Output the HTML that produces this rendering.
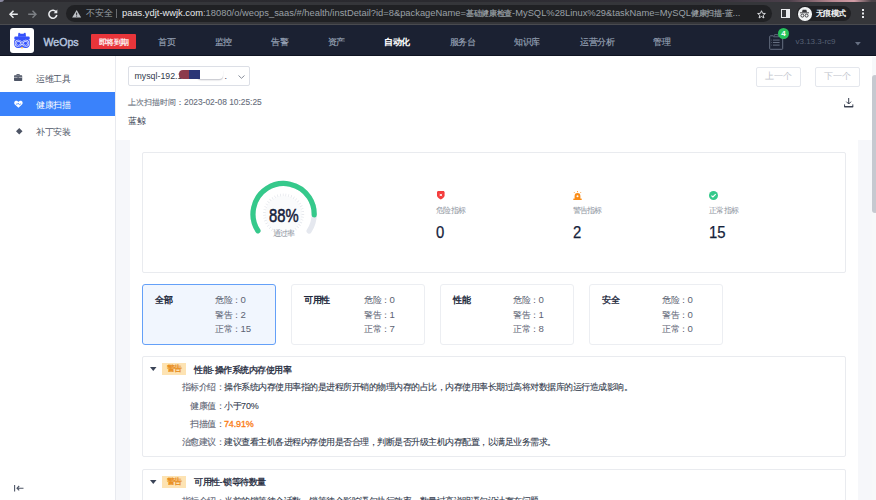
<!DOCTYPE html>
<html><head><meta charset="utf-8">
<style>
*{margin:0;padding:0;box-sizing:border-box}
html,body{width:876px;height:500px;overflow:hidden;background:#fff;font-family:"Liberation Sans",sans-serif;font-size:8.5px;color:#313a4c}
.a{position:absolute;white-space:nowrap;line-height:10px}
svg{position:absolute;overflow:visible}
/* browser chrome */
#tabs{position:absolute;left:0;top:0;width:876px;height:2.5px;background:linear-gradient(90deg,#2c2b30 0%,#2a2a2f 50%,#34313a 80%,#4a3f4a 90%,#b88790 95%,#d19ca5 97.5%,#4a4348 99.5%)}
#toolbar{position:absolute;left:0;top:2px;width:876px;height:22px;background:#35363a}
#tsep{position:absolute;left:0;top:24px;width:876px;height:1px;background:#4a4b4f}
#omni{position:absolute;left:66px;top:5px;width:706px;height:17px;border-radius:9px;background:#202124}
#url{position:absolute;left:122px;top:8px;font-size:9.35px;line-height:11px;width:628px;overflow:hidden;color:#9aa0a6;white-space:nowrap}
#url b{font-weight:normal;color:#e8eaed}
#url i{font-style:normal;font-size:8px;letter-spacing:-.3px;-webkit-text-stroke:.2px #9aa0a6}
#incog{position:absolute;left:797px;top:6px;width:54px;height:15px;border-radius:8px;background:#202124}
#nav{position:absolute;left:0;top:25px;width:876px;height:31px;background:#1b2132;border-bottom:1px solid #0f1422}
.nv{position:absolute;top:36.5px;color:#98a3b6;-webkit-text-stroke:.15px #98a3b6;font-size:9px;letter-spacing:-.5px;line-height:10px;white-space:nowrap}
/* sidebar */
#side{position:absolute;left:0;top:56px;width:116px;height:444px;background:#fff;border-right:1px solid #e8eaef}
.si{position:absolute;left:0;width:115px;height:24px}
.si span{position:absolute;left:36px;top:7.5px;font-size:9px;letter-spacing:-.5px;line-height:10px;color:#4e5566;white-space:nowrap}
/* content */
#gray{position:absolute;left:116px;top:140px;width:760px;height:360px;background:#f6f7fa}
#white{position:absolute;left:130px;top:140px;width:728px;height:360px;background:#fff}
#sbar{position:absolute;left:872px;top:57px;width:4px;height:443px;background:#f7f8fa}
#thumb{position:absolute;left:872px;top:75px;width:6px;height:138px;background:#c6c9d0;border-radius:3px}
.btn{position:absolute;top:67px;width:45.3px;height:19.5px;border:1px solid #e4e7ed;border-radius:2px;color:#c0c4cc;font-size:8.5px;line-height:17px;text-align:center}
.card{position:absolute;border:1px solid #e9ebef;border-radius:2px;background:#fff}
.cat{position:absolute;top:284px;width:134px;height:60.5px;border:1px solid #eceef2;border-radius:3px;background:#fff}
.cat.on{border-color:#64a0f8;background:#f1f6fe}
.cat u{text-decoration:none;font-size:9.6px;letter-spacing:0}
.cat b{position:absolute;left:12px;top:10px;font-size:9px;letter-spacing:-.5px;line-height:10px;color:#1f2a3d;font-weight:normal;-webkit-text-stroke:.4px #1f2a3d;white-space:nowrap}
.cat i{position:absolute;left:72px;font-style:normal;font-size:9px;letter-spacing:-.5px;line-height:10px;color:#5c6373;white-space:nowrap}
.stl{position:absolute;top:205.5px;font-size:8px;letter-spacing:-.7px;line-height:9px;color:#8d93a0;white-space:nowrap}
.stn{position:absolute;top:225px;font-size:16px;line-height:16px;color:#15223a;-webkit-text-stroke:.25px #15223a;transform:scaleX(.93);transform-origin:0 0}
.lab{position:absolute;width:44px;text-align:right;color:#5c6373;-webkit-text-stroke:.1px #5c6373;white-space:nowrap;font-size:9px;letter-spacing:-.5px;line-height:10px}
.val{position:absolute;left:224px;color:#313a4c;-webkit-text-stroke:.1px #313a4c;white-space:nowrap;font-size:9px;letter-spacing:-.5px;line-height:10px}
.tag{position:absolute;width:24px;height:12px;background:#fde3b3;color:#e98f22;-webkit-text-stroke:.3px #e98f22;font-size:8px;letter-spacing:-.5px;line-height:12px;text-align:center;padding-left:.5px}
</style></head><body>
<div id="tabs"></div>
<div id="toolbar"></div>
<div class="a" style="left:-2px;top:-3px;width:6px;height:5px;border-radius:50%;background:#8a89a0"></div>
<div id="tsep"></div>
<!-- back / fwd / reload -->
<svg style="left:8.9px;top:9.6px" width="9" height="8.4" viewBox="0 0 10 9.4"><path d="M9.8 4.7H1.4M5 .8L1.1 4.7 5 8.6" stroke="#e8eaed" stroke-width="1.7" fill="none"/></svg>
<svg style="left:28.2px;top:9.6px" width="9" height="8.4" viewBox="0 0 10 9.4"><path d="M.2 4.7H8.6M5 .8L8.9 4.7 5 8.6" stroke="#7d8085" stroke-width="1.6" fill="none"/></svg>
<svg style="left:48px;top:9px" width="10" height="10" viewBox="0 0 10 10"><path d="M8.3 3.2A4 4 0 1 0 8.8 6" stroke="#e8eaed" stroke-width="1.6" fill="none"/><path d="M9.3 0.6v3.6H5.7z" fill="#e8eaed"/></svg>
<div id="omni"></div>
<svg style="left:72px;top:9.6px" width="9.3" height="7.5" viewBox="0 0 9 7.5"><path d="M4.5 0L9 7.5H0z" fill="#bdc1c6"/><path d="M4.5 2.6v2.3M4.5 5.6v1" stroke="#202124" stroke-width="1"/></svg>
<div class="a" style="left:86px;top:8px;font-size:8.8px;line-height:11px;color:#9aa0a6">不安全</div>
<div class="a" style="left:116.3px;top:9px;width:.8px;height:9px;background:#6a6c70"></div>
<div id="url"><b>paas.ydjt-wwjk.com</b>:18080/o/weops_saas/#/health/instDetail?id=8&amp;packageName=<i>基础健康检查</i>-MySQL%28Linux%29&amp;taskName=MySQL<i>健康扫描</i>-<i>蓝</i>...</div>
<svg style="left:757px;top:10px" width="9" height="9" viewBox="0 0 10 10"><path d="M5 0.8l1.2 2.9 3.1.2-2.4 2 .8 3L5 7.2 2.3 8.9l.8-3-2.4-2 3.1-.2z" stroke="#e8eaed" stroke-width="1" fill="none" stroke-linejoin="round"/></svg>
<div class="a" style="left:781px;top:9px;width:9px;height:9px;background:#e8eaed"></div>
<div class="a" style="left:782.3px;top:10.3px;width:4px;height:6.4px;background:#35363a"></div>
<div id="incog"></div>
<div class="a" style="left:798px;top:7px;width:13.5px;height:13.5px;border-radius:50%;background:#f1f3f4"></div>
<svg style="left:799px;top:9px" width="11" height="10" viewBox="0 0 11 10"><path d="M3 3.2h5l-.6-2.4H3.6z" fill="#35363a"/><path d="M1 3.8h9" stroke="#35363a" stroke-width="0.9"/><circle cx="3.4" cy="6.6" r="1.5" stroke="#35363a" stroke-width="0.9" fill="none"/><circle cx="7.6" cy="6.6" r="1.5" stroke="#35363a" stroke-width="0.9" fill="none"/></svg>
<div class="a" style="left:816px;top:8.5px;font-size:8px;letter-spacing:-.6px;line-height:10px;color:#f1f3f4;font-weight:bold">无痕模式</div>
<div class="a" style="left:862px;top:9px;width:2px;height:2px;background:#e8eaed;box-shadow:0 3.5px 0 #e8eaed,0 7px 0 #e8eaed"></div>

<div id="nav"></div>
<div class="a" style="left:10px;top:28px;width:24px;height:25px;background:#fff;border-radius:3px"></div>
<svg style="left:10px;top:28px" width="24" height="25" viewBox="0 0 24 25">
<path d="M8 8.8L8.3 5.4Q8.5 4.5 9.3 4.8L10.6 5.7H13.4L14.7 4.8Q15.5 4.5 15.7 5.4L16 8.8Z" fill="#3552fb"/>
<rect x="4.3" y="8.6" width="15.4" height="2.8" rx="1.2" fill="#3552fb"/>
<path d="M4.2 13Q4.2 11 6.5 11H17.5Q19.8 11 19.8 13V15.6Q19.8 20 15.8 20Q13.3 20 12 18.7Q10.7 20 8.2 20Q4.2 20 4.2 15.6Z" fill="#3552fb"/>
<path d="M12 15.3C13.2 13.8 14.2 12.7 15.6 12.7A2.6 2.6 0 0 1 15.6 17.9C14.2 17.9 13.2 16.8 12 15.3C10.8 13.8 9.8 12.7 8.4 12.7A2.6 2.6 0 0 0 8.4 17.9C9.8 17.9 10.8 16.8 12 15.3Z" stroke="#fff" stroke-width="1.9" fill="none"/>
<path d="M12 15.3C13.2 13.8 14.2 12.7 15.6 12.7A2.6 2.6 0 0 1 15.6 17.9C14.2 17.9 13.2 16.8 12 15.3C10.8 13.8 9.8 12.7 8.4 12.7A2.6 2.6 0 0 0 8.4 17.9C9.8 17.9 10.8 16.8 12 15.3Z" stroke="#3552fb" stroke-width=".9" fill="none"/>
<circle cx="12" cy="19.6" r=".9" fill="#f7b844"/></svg>
<div class="a" style="left:43.5px;top:35.5px;font-size:10.6px;line-height:12px;color:#b4c3de;-webkit-text-stroke:0.45px #b4c3de">WeOps</div>
<div class="a" style="left:91px;top:33.5px;width:45px;height:15.5px;background:#e8353a;border-radius:1px;color:#fff;font-size:8px;letter-spacing:-.5px;line-height:15.5px;text-align:center;padding-top:1px;-webkit-text-stroke:.2px #fff">即将到期</div>
<div class="nv" style="left:158px">首页</div>
<div class="nv" style="left:214.5px">监控</div>
<div class="nv" style="left:271px">告警</div>
<div class="nv" style="left:327.5px">资产</div>
<div class="nv" style="left:384px;color:#fff;-webkit-text-stroke:.4px #fff">自动化</div>
<div class="nv" style="left:449.5px">服务台</div>
<div class="nv" style="left:514px">知识库</div>
<div class="nv" style="left:580px">运营分析</div>
<div class="nv" style="left:653px">管理</div>
<svg style="left:768.8px;top:33.5px" width="15" height="16" viewBox="0 0 15 16"><path d="M4.2 1.8H1.5Q.7 1.8 .7 2.6V14.6Q.7 15.3 1.5 15.3H12.9Q13.7 15.3 13.7 14.6V2.6Q13.7 1.8 12.9 1.8H10.2" stroke="#666f82" stroke-width="1" fill="none"/><path d="M4.6 2.8L5.6 .6H8.8L9.8 2.8z" stroke="#666f82" stroke-width=".9" fill="#1b2132"/><path d="M4 6.1h6.6M4 8.5h6.6M4 11.1h6.6" stroke="#666f82" stroke-width="1"/><path d="M2.4 6.1h.7M2.4 8.5h.7M2.4 11.1h.7" stroke="#666f82" stroke-width=".9"/></svg>
<div class="a" style="left:778px;top:27.5px;width:11px;height:11px;border-radius:50%;background:#27c25c;color:#fff;font-size:8px;line-height:11px;text-align:center;font-weight:bold">4</div>
<div class="a" style="left:795.5px;top:36.5px;font-size:8px;line-height:10px;color:#566073">v3.13.3-rc9</div>
<svg style="left:855.2px;top:41.6px" width="5.8" height="3.4" viewBox="0 0 5.8 3.4"><path d="M0 0h5.8L2.9 3.4z" fill="#666f82"/></svg>

<div id="side">
</div>
<div class="si" style="top:66px"><svg style="left:14.2px;top:8px" width="8.2" height="7" viewBox="0 0 8.2 7"><path d="M2.8 1.4V0.5h2.6v.9" stroke="#4e5566" stroke-width=".9" fill="none"/><rect x="0" y="1.3" width="8.2" height="5.7" rx=".7" fill="#4e5566"/><path d="M0 3.3h8.2" stroke="#fff" stroke-width=".6"/><rect x="3.5" y="2.8" width="1.2" height="1.1" fill="#4e5566"/></svg><span>运维工具</span></div>
<div class="si" style="top:92px;background:#3a82fb"><svg style="left:13.9px;top:7.8px" width="8.9" height="8.4" viewBox="0 0 10 9"><path d="M5 8.6L1 4.8C-.3 3.4.2 .6 2.6.6 3.7.6 4.5 1.3 5 2c.5-.7 1.3-1.4 2.4-1.4 2.4 0 2.9 2.8 1.6 4.2z" fill="#fff"/><path d="M2.2 4.4l1.6.1 1-1.3 1.2 2 .9-.8h1.1" stroke="#3a82fb" stroke-width=".8" fill="none"/></svg><span style="color:#fff">健康扫描</span></div>
<div class="si" style="top:119px"><svg style="left:15.5px;top:9px" width="6.5" height="6.5" viewBox="0 0 8 8"><path d="M4 0L8 4 4 8 0 4z" fill="#4e5566"/></svg><span>补丁安装</span></div>
<svg style="left:13.6px;top:484.8px" width="9.5" height="6.4" viewBox="0 0 9.5 6.4"><path d="M0.6 0v6.4M9.5 3.2H3.2M5.2 1L3 3.2 5.2 5.4" stroke="#4e5566" stroke-width="1.1" fill="none"/></svg>

<div id="gray"></div>
<div id="white"></div>
<div id="sbar"></div>
<div id="thumb"></div>

<!-- header -->
<div class="a" style="left:128px;top:66px;width:121.5px;height:19.5px;border:1px solid #dcdfe6;border-radius:2px"></div>
<div class="a" style="left:134.5px;top:71px;font-size:8.8px;line-height:10px;color:#313a4c">mysql-192.1</div>
<div class="a" style="left:197px;top:69.7px;width:26px;height:9.6px;background:#fff;border-radius:0 0 4px 4px;box-shadow:0 1.3px 1.2px #c9cad0"></div>
<div class="a" style="left:179.2px;top:69.7px;width:9.5px;height:9.2px;background:#8c3a4c;border-radius:4px 0 0 4px"></div>
<div class="a" style="left:188.7px;top:69.7px;width:11.2px;height:9.2px;background:#2b3576"></div>
<div class="a" style="left:224.5px;top:71px;font-size:8.8px;line-height:10px;color:#313a4c">.</div>
<svg style="left:238px;top:74.5px" width="7" height="4" viewBox="0 0 7 4"><path d="M0.5 0.5L3.5 3.3 6.5 0.5" stroke="#7b8190" stroke-width="0.9" fill="none"/></svg>
<div class="a" style="left:128px;top:97px;font-size:8px;line-height:10px;color:#676e7b;-webkit-text-stroke:.1px #676e7b">上次扫描时间：<span style="font-size:8.4px">2023-02-08 10:25:25</span></div>
<div class="a" style="left:128px;top:116px;font-size:9px;letter-spacing:-.5px;line-height:10px;color:#313a4c">蓝鲸</div>
<div class="btn" style="left:755.5px">上一个</div>
<div class="btn" style="left:814.8px">下一个</div>
<svg style="left:844px;top:97.8px" width="9.4" height="9.4" viewBox="0 0 10 10"><path d="M5 0v6.2M2.5 3.9L5 6.4 7.5 3.9" stroke="#2a3142" stroke-width="1" fill="none"/><path d="M.6 6.8v2.5h8.8V6.8" stroke="#2a3142" stroke-width=".95" fill="none"/><rect x=".2" y="8.8" width="9.6" height="1.1" fill="#2a3142"/></svg>

<!-- summary card -->
<div class="card" style="left:142px;top:152px;width:704px;height:121px"></div>
<svg style="left:250px;top:180px" width="68" height="60" viewBox="250 180 68 60">
<circle cx="283.6" cy="214.1" r="30.6" fill="none" stroke="#e5e8ef" stroke-width="5.2" stroke-linecap="round" stroke-dasharray="131.4 1000" transform="rotate(147 283.6 214.1)"/>
<circle cx="283.6" cy="214.1" r="30.6" fill="none" stroke="#35c98b" stroke-width="5.2" stroke-linecap="round" stroke-dasharray="114.4 1000" transform="rotate(147 283.6 214.1)"/>
<circle cx="283.6" cy="214.1" r="18.5" fill="#fafbfc"/>
<circle cx="283.6" cy="214.1" r="19.3" fill="none" stroke="#dfe2e8" stroke-width="2.6" stroke-dasharray="0.6 2.2"/>
</svg>
<div class="a" style="left:268.5px;top:205.5px;font-size:18.5px;line-height:18px;color:#16213a;-webkit-text-stroke:.5px #16213a;transform:scale(.8,1.04);transform-origin:0 0">88%</div>
<div class="a" style="left:272.5px;top:228.5px;font-size:8px;letter-spacing:-.7px;line-height:9px;color:#8d93a0">通过率</div>

<svg style="left:436.8px;top:190.8px" width="7.6" height="8.6" viewBox="0 0 7.6 8.6"><path d="M.8 0H6.8L7.6 .9V4.6C7.6 6.4 5.6 7.8 3.8 8.6 2 7.8 0 6.4 0 4.6V.9z" fill="#f43d3d"/><path d="M2.7 2.9L4.9 5.1M4.9 2.9L2.7 5.1" stroke="#fff" stroke-width="1"/></svg>
<div class="stl" style="left:436px">危险指标</div>
<div class="stn" style="left:436px">0</div>
<svg style="left:572.5px;top:190.5px" width="9" height="9" viewBox="0 0 9 9"><path d="M1.6 8V5a2.9 2.9 0 0 1 5.8 0v3z" fill="#fa8c16"/><rect x="0.3" y="7.6" width="8.4" height="1.4" fill="#fa8c16"/><path d="M4.5 0v1.2M1 1.2l.9.9M8 1.2l-.9.9" stroke="#fa8c16" stroke-width=".8"/><circle cx="4.5" cy="5.3" r="1" fill="#fff"/></svg>
<div class="stl" style="left:572.5px">警告指标</div>
<div class="stn" style="left:572.5px">2</div>
<svg style="left:709px;top:190.5px" width="9" height="9" viewBox="0 0 9 9"><circle cx="4.5" cy="4.5" r="4.5" fill="#35c98b"/><path d="M2.4 4.6l1.5 1.4 2.8-2.8" stroke="#fff" stroke-width="1.2" fill="none"/></svg>
<div class="stl" style="left:709px">正常指标</div>
<div class="stn" style="left:709px">15</div>

<!-- category cards -->
<div class="cat on" style="left:142px"><b>全部</b><i style="top:10px">危险：<u>0</u></i><i style="top:24.5px">警告：<u>2</u></i><i style="top:38.7px">正常：<u>15</u></i></div>
<div class="cat" style="left:291px"><b>可用性</b><i style="top:10px">危险：<u>0</u></i><i style="top:24.5px">警告：<u>1</u></i><i style="top:38.7px">正常：<u>7</u></i></div>
<div class="cat" style="left:440px"><b>性能</b><i style="top:10px">危险：<u>0</u></i><i style="top:24.5px">警告：<u>1</u></i><i style="top:38.7px">正常：<u>8</u></i></div>
<div class="cat" style="left:589px"><b>安全</b><i style="top:10px">危险：<u>0</u></i><i style="top:24.5px">警告：<u>0</u></i><i style="top:38.7px">正常：<u>0</u></i></div>

<!-- issue 1 -->
<div class="card" style="left:142px;top:356px;width:704px;height:101px"></div>
<svg style="left:150px;top:366.5px" width="7" height="5" viewBox="0 0 7 5"><path d="M0 0h6.5L3.25 4z" fill="#3b4457"/></svg>
<div class="tag" style="left:162px;top:363px">警告</div>
<div class="a" style="left:194px;top:364.5px;font-size:9px;letter-spacing:-.5px;color:#1f2a3d;-webkit-text-stroke:.3px #1f2a3d">性能<span style="letter-spacing:.6px">-</span>操作系统内存使用率</div>
<div class="lab" style="left:180px;top:382px;width:44px">指标介绍：</div>
<div class="val" style="top:382px">操作系统内存使用率指的是进程所开销的物理内存的占比，内存使用率长期过高将对数据库的运行造成影响。</div>
<div class="lab" style="left:180px;top:400.5px;width:44px">健康值：</div>
<div class="val" style="top:400.5px">小于<span style="letter-spacing:-.1px;font-size:9px">70%</span></div>
<div class="lab" style="left:180px;top:419px;width:44px">扫描值：</div>
<div class="val" style="top:419px;color:#fa7d16;letter-spacing:-.15px;font-size:9px;-webkit-text-stroke:.3px #fa7d16">74.91%</div>
<div class="lab" style="left:180px;top:437px;width:44px">治愈建议：</div>
<div class="val" style="top:437px">建议查看主机各进程内存使用是否合理，判断是否升级主机内存配置，以满足业务需求。</div>

<!-- issue 2 -->
<div class="card" style="left:142px;top:469px;width:704px;height:60px"></div>
<svg style="left:150px;top:480px" width="7" height="5" viewBox="0 0 7 5"><path d="M0 0h6.5L3.25 4z" fill="#3b4457"/></svg>
<div class="tag" style="left:162px;top:476px">警告</div>
<div class="a" style="left:194px;top:476.7px;font-size:9px;letter-spacing:-.5px;color:#1f2a3d;-webkit-text-stroke:.3px #1f2a3d">可用性<span style="letter-spacing:.6px">-</span>锁等待数量</div>
<div class="lab" style="left:180px;top:495.5px;width:44px">指标介绍：</div>
<div class="val" style="top:495.5px">当前的锁等待会话数，锁等待会影响语句执行效率，数量过高说明语句设计存在问题。</div>
</body></html>
